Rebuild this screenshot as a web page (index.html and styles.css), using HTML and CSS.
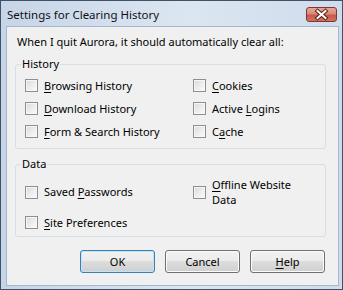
FILE: index.html
```html
<!DOCTYPE html>
<html>
<head>
<meta charset="utf-8">
<title>Settings for Clearing History</title>
<link rel="stylesheet" href="styles.css">
</head>
<body>
<div class="window">
  <div class="titlebar">
    <span class="title">Settings for Clearing History</span>
    <span class="close" aria-label="Close">
      <svg width="31" height="15" viewBox="0 0 31 15">
        <path d="M11.5 4 L19.5 11 M19.5 4 L11.5 11" stroke="#5a2018" stroke-width="4" stroke-linecap="square" fill="none"/>
        <path d="M11.5 4 L19.5 11 M19.5 4 L11.5 11" stroke="#ffffff" stroke-width="2" stroke-linecap="square" fill="none"/>
      </svg>
    </span>
  </div>
  <div class="client">
    <p class="intro">When I quit Aurora, it should automatically clear all:</p>
    <fieldset class="group group-history">
      <legend>History</legend>
      <div class="grid grid-history">
        <label class="check"><span class="box"></span><span class="text"><u>B</u>rowsing History</span></label>
        <label class="check"><span class="box"></span><span class="text"><u>C</u>ookies</span></label>
        <label class="check"><span class="box"></span><span class="text"><u>D</u>ownload History</span></label>
        <label class="check"><span class="box"></span><span class="text">Active <u>L</u>ogins</span></label>
        <label class="check"><span class="box"></span><span class="text"><u>F</u>orm &amp; Search History</span></label>
        <label class="check"><span class="box"></span><span class="text">C<u>a</u>che</span></label>
      </div>
    </fieldset>
    <fieldset class="group group-data">
      <legend>Data</legend>
      <div class="grid grid-data">
        <label class="check"><span class="box"></span><span class="text">Saved <u>P</u>asswords</span></label>
        <label class="check"><span class="box"></span><span class="text text-wrap"><span class="line"><u>O</u>ffline Website</span> <span class="line">Data</span></span></label>
        <label class="check"><span class="box"></span><span class="text"><u>S</u>ite Preferences</span></label>
      </div>
    </fieldset>
    <div class="buttons">
      <button class="btn btn-default">OK</button>
      <button class="btn">Cancel</button>
      <button class="btn"><u>H</u>elp</button>
    </div>
  </div>
</div>
</body>
</html>
```

FILE: styles.css
```css
* { box-sizing: border-box; }
html, body { margin: 0; padding: 0; }
body {
  width: 343px;
  height: 290px;
  overflow: hidden;
  font-family: "Noto Sans", "Open Sans", sans-serif;
  font-size: 11px;
  color: #000;
  background: #cfdcea;
}
.window {
  width: 343px;
  height: 290px;
  border: 1px solid #3f5266;
  background: linear-gradient(90deg, #c6d5e7 0%, #dce6f2 55%, #cfdcec 100%);
  padding: 0 3px 3px 5px;
  display: flex;
  flex-direction: column;
}
.titlebar {
  height: 25px;
  flex: none;
  display: flex;
  justify-content: space-between;
  align-items: flex-start;
  padding-left: 1px;
}
.title {
  line-height: 16px;
  margin-top: 6px;
  color: #111;
  font-size: 11.5px;
}
.close {
  width: 31px;
  height: 15px;
  margin-top: 6px;
  margin-right: 2px;
  border: 1px solid #7a3a30;
  border-radius: 3px;
  background: linear-gradient(#e6a799 0%, #d98a7a 45%, #c95847 55%, #d27262 100%);
  display: flex;
  align-items: center;
  justify-content: center;
  overflow: hidden;
}
.close svg { display: block; flex: none; }
.client {
  flex: 1;
  background: #f0f0f0;
  border: 1px solid #a4b7cb;
  padding: 7px 12px 12px 8px;
  display: flex;
  flex-direction: column;
}
.intro {
  margin: 0 0 6px 2px;
  line-height: 16px;
}
.group {
  margin: 0;
  border: 1px solid #d5dfe5;
  border-radius: 3px;
  padding: 2px 0 5px 9px;
  min-width: 0;
}
.group legend {
  padding: 0 1px;
  margin-left: -4px;
  line-height: 16px;
}
.group-data {
  margin-top: 7px;
  padding-top: 5px;
  padding-bottom: 2px;
}
.grid {
  display: grid;
  grid-template-columns: 168px 1fr;
}
.grid-history { grid-auto-rows: 23px; }
.grid-data {
  grid-template-rows: 30px 23px;
  row-gap: 4px;
}
.check {
  display: flex;
  align-items: center;
  gap: 6px;
}
.text { line-height: 16px; white-space: nowrap; }
.text-wrap {
  display: flex;
  flex-direction: column;
  gap: 0;
}
.text-wrap .line { display: block; line-height: 15px; }
.box {
  width: 13px;
  height: 13px;
  flex: none;
  border: 1px solid #8e8f8f;
  background: linear-gradient(135deg, #d9d9d9 0%, #ececec 50%, #fbfbfb 100%);
  box-shadow: inset 0 0 0 1px #f6f6f6;
}
u { text-underline-offset: 2px; }
.buttons {
  margin-top: 13px;
  margin-right: 1px;
  display: flex;
  justify-content: flex-end;
  gap: 10px;
}
.btn {
  width: 75px;
  height: 23px;
  padding: 0;
  font-family: inherit;
  font-size: 11px;
  color: #000;
  border: 1px solid #707070;
  border-radius: 3px;
  background: linear-gradient(#f2f2f2 0%, #ebebeb 50%, #dddddd 50%, #cfcfcf 100%);
  box-shadow: inset 0 0 0 1px #fbfbfb;
}
.btn-default {
  border-color: #3c7fb1;
  box-shadow: inset 0 0 0 1px #bfe3f8;
}
```
